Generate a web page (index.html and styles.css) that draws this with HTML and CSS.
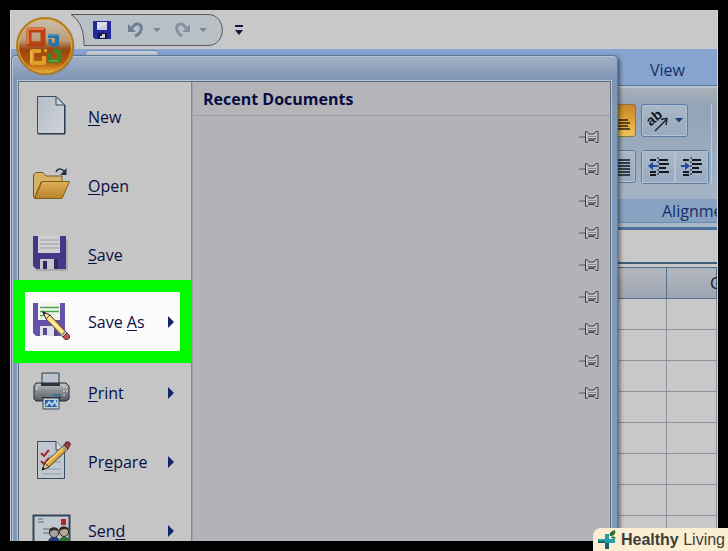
FILE: index.html
```html
<!DOCTYPE html>
<html lang="en">
<head>
    <meta charset="UTF-8">
    <meta name="viewport" content="width=device-width, initial-scale=1.0">
    <title>Office Menu</title>
    <link rel="stylesheet" href="styles.css">
</head>
<body>
    <div class="window">
        <!-- title bar with quick access toolbar -->
        <header class="titlebar">
            <div class="quick">
                <svg class="quick-shape" viewBox="0 0 156 34" width="156" height="34" aria-hidden="true">
                    <path d="M1 1.500H138C157 1.500 157 32.500 138 32.500H14C14 18 11 8 1 1.500Z" fill="#b9c0c6" stroke="#55585e"/>
                </svg>
                <button class="qbtn" aria-label="Save">
                    <svg viewBox="0 0 18 18" width="18" height="18">
                        <path d="M0 0H18V18H2L0 16Z" fill="#25279c"/>
                        <path d="M4 1H14V9H4Z" fill="#c4cbe0"/>
                        <path d="M4 1H14V3L4 8Z" fill="#dde0e8"/>
                        <path d="M5 12H14V18H5Z" fill="#10104a"/>
                        <path d="M9 13H12V17H7V15H9Z" fill="#c9cad4"/>
                    </svg>
                </button>
                <button class="qbtn" aria-label="Undo">
                    <svg viewBox="0 0 18 18" width="18" height="18">
                        <path d="M5 7C9 0 16 3 14 9C13 13 11 14 8 15" fill="none" stroke="#6c7e96" stroke-width="3"/>
                        <path d="M1 3V11H9Z" fill="#6c7e96"/>
                    </svg>
                </button>
                <span class="drop"></span>
                <button class="qbtn" aria-label="Redo">
                    <svg viewBox="0 0 18 18" width="18" height="18">
                        <path d="M13 7C9 0 2 3 4 9C5 13 7 14 9 15" fill="none" stroke="#8592a3" stroke-width="3"/>
                        <path d="M17 3V11H9Z" fill="#8592a3"/>
                    </svg>
                </button>
                <span class="drop"></span>
            </div>
            <button class="customize" aria-label="Customize Quick Access Toolbar">
                <svg viewBox="0 0 10 12" width="10" height="12">
                    <path d="M1 1H9V3H1ZM1 6H9L5 11Z" fill="#10194a"/>
                </svg>
            </button>
        </header>

        <nav class="tabs">
            <span class="tab-home"></span>
            <a href="#view">View</a>
        </nav>

        <section class="ribbon">
            <div class="group">
                <div class="tools">
                    <div class="tool-row">
                        <button class="tool gold" aria-label="Bottom Align">
                            <svg viewBox="0 0 12 20" width="12" height="20">
                                <path d="M0 9H10M0 12H12M0 15H10M0 18H12" stroke="#2a2410" stroke-width="1.500"/>
                            </svg>
                        </button>
                        <button class="tool wide" aria-label="Orientation">
                            <svg viewBox="0 0 24 24" width="24" height="24">
                                <text x="1" y="13" transform="rotate(-40 9 10)" class="ab">ab</text>
                                <path d="M9 22L20 11M15 10.500L21 9.500L20 16" fill="none" stroke="#20242c" stroke-width="1.500"/>
                            </svg>
                            <svg viewBox="0 0 8 5" width="8" height="5"><path d="M0 0H8L4 4.500Z" fill="#1f3f6e"/></svg>
                        </button>
                    </div>
                    <div class="tool-row">
                        <button class="tool" aria-label="Justify">
                            <svg viewBox="0 0 12 20" width="12" height="20">
                                <path d="M0 3H12M0 6H12M0 9H12M0 12H12M0 15H12M0 18H12" stroke="#15181e" stroke-width="1.500"/>
                            </svg>
                        </button>
                        <div class="pair">
                            <button class="tool" aria-label="Decrease Indent">
                                <svg viewBox="0 0 22 20" width="22" height="20">
                                    <path d="M2 3H8M11 3H20M11 7H21M11 11H18M2 15H8M11 15H21M2 18H8" stroke="#15181e" stroke-width="2"/>
                                    <path d="M10 0V20" stroke="#15181e" stroke-dasharray="2 2"/>
                                    <path d="M0 9L5 5V8H9V10H5V13Z" fill="#1e49a0"/>
                                </svg>
                            </button>
                            <button class="tool" aria-label="Increase Indent">
                                <svg viewBox="0 0 22 20" width="22" height="20">
                                    <path d="M2 3H8M11 3H20M11 7H21M11 11H18M2 15H8M11 15H21M2 18H8" stroke="#15181e" stroke-width="2"/>
                                    <path d="M10 0V20" stroke="#15181e" stroke-dasharray="2 2"/>
                                    <path d="M9 9L4 5V8H0V10H4V13Z" fill="#1e49a0"/>
                                </svg>
                            </button>
                        </div>
                    </div>
                </div>
                <div class="group-name">Alignment</div>
            </div>
        </section>

        <div class="formula"></div>

        <table class="sheet">
            <thead>
                <tr><th class="col-f">F</th><th>G</th></tr>
            </thead>
            <tbody>
                <tr><td></td><td></td></tr>
                <tr><td></td><td></td></tr>
                <tr><td></td><td></td></tr>
                <tr><td></td><td></td></tr>
                <tr><td></td><td></td></tr>
                <tr><td></td><td></td></tr>
                <tr><td></td><td></td></tr>
                <tr><td></td><td></td></tr>
            </tbody>
        </table>

        <!-- office menu -->
        <div class="menu">
            <div class="panes">
                <nav class="commands">
                    <button class="item">
                        <svg viewBox="0 0 40 40" width="40" height="40">
                            <defs>
                                <linearGradient id="paper" x1="0" y1="0" x2="1" y2="1"><stop offset="0" stop-color="#b4bdc8"/><stop offset="1" stop-color="#d2d3d8"/></linearGradient>
                                <linearGradient id="folder" x1="0" y1="0" x2="0" y2="1"><stop offset="0" stop-color="#dfb055"/><stop offset="1" stop-color="#b9822a"/></linearGradient>
                                <linearGradient id="body" x1="0" y1="0" x2="0" y2="1"><stop offset="0" stop-color="#b8bbc0"/><stop offset="1" stop-color="#55585e"/></linearGradient>
                            </defs>
                            <path d="M6.500 1.500H25L33.500 10V38.500H6.500Z" fill="url(#paper)" stroke="#374b62"/>
                            <path d="M25 1.500V10H33.500Z" fill="#c9d3dc" stroke="#374b62"/>
                            <path d="M34 10V39H7" fill="none" stroke="#1f3040"/>
                        </svg>
                        <span><u>N</u>ew</span>
                    </button>
                    <button class="item">
                        <svg viewBox="0 0 40 40" width="40" height="40">
                            <path d="M2.500 33V11L5 8.500H12L15 12H31V18H10L3.500 34Z" fill="#d8b263" stroke="#75582a"/>
                            <path d="M3.500 34.500L11 17.500H38.500L31 34.500Z" fill="url(#folder)" stroke="#805c1e"/>
                            <path d="M25 8C27 4 32 4 34 9" fill="none" stroke="#253444" stroke-width="1.500"/>
                            <path d="M35.500 4V11H29Z" fill="#253444"/>
                        </svg>
                        <span><u>O</u>pen</span>
                    </button>
                    <button class="item">
                        <svg viewBox="0 0 40 40" width="40" height="40">
                            <path d="M5 37H36V6" fill="none" stroke="#aaaaae" stroke-width="2"/>
                            <path d="M2 3H35V36H5L2 33Z" fill="#453787"/>
                            <path d="M7 3H29V20H7Z" fill="#cfd0cf"/>
                            <path d="M9 7H28M9 11H28M9 15H28" stroke="#999e9e"/>
                            <path d="M9 26H26V36H9Z" fill="#c3c5cc"/>
                            <path d="M12 28H16V36H12ZM23 26H27V36H23Z" fill="#30265e"/>
                        </svg>
                        <span><u>S</u>ave</span>
                    </button>
                    <button class="item marked">
                        <svg viewBox="0 0 40 40" width="40" height="40">
                            <path d="M2 3H34V36H5L2 33Z" fill="#6552a8"/>
                            <path d="M7 3H29V20H7Z" fill="#f2f5f0"/>
                            <path d="M9 7.500H28M9 11.500H28M9 15.500H20" stroke="#48a547" stroke-width="1.500"/>
                            <path d="M9 26H26V36H9Z" fill="#dedfe8"/>
                            <path d="M12 28H16V35H12ZM23 26H26V36H23Z" fill="#54458f"/>
                            <path d="M12 12L15 19L33 38L37 34L19 15Z" fill="#f2cb68" stroke="#58452b"/>
                            <path d="M17 17L34 35" stroke="#fff0ad" stroke-width="2"/>
                            <path d="M12 12L19 15L15 19Z" fill="#f1dfbd" stroke="#58452b"/>
                            <path d="M11 11L15 13L13 15Z" fill="#18202c"/>
                            <path d="M32 37L36 33L38.500 35.500V38L36.500 39.500H34Z" fill="#b95260" stroke="#5d3038"/>
                            <path d="M30 36L35 31" stroke="#9a9b92" stroke-width="2"/>
                        </svg>
                        <span>Save <u>A</u>s</span>
                        <i class="arrow"></i>
                    </button>
                    <button class="item">
                        <svg viewBox="0 0 40 40" width="40" height="40">
                            <path d="M11 14V2H28V14Z" fill="#bac2cf" stroke="#303843"/>
                            <path d="M5 12H35L38 15V28L35 30H5L3 28V15Z" fill="url(#body)" stroke="#282b30"/>
                            <path d="M6 14H34" stroke="#d0d0d0"/>
                            <path d="M10 12H29V15H10Z" fill="#303238"/>
                            <path d="M5 20H36" stroke="#85888d"/>
                            <path d="M11 26H30L28 30H13Z" fill="#202329"/>
                            <path d="M12 27H28V38H12Z" fill="#c5ced7" stroke="#394859"/>
                            <path d="M14 29H26V36H14Z" fill="#285f9f"/>
                            <path d="M15 35L18 31L21 34L24 30L26 35" fill="none" stroke="#b5d6ed" stroke-width="2"/>
                            <path d="M6 16V19M33 15V17M33 19V21M33 23V25M36 15V17M36 19V21" stroke="#dcdcdc" stroke-width="1"/>
                            <path d="M23 24H29" stroke="#2a70ad" stroke-width="2"/>
                        </svg>
                        <span><u>P</u>rint</span>
                        <i class="arrow"></i>
                    </button>
                    <button class="item">
                        <svg viewBox="0 0 40 40" width="40" height="40">
                            <path d="M6.500 1.500H25L33.500 10V38.500H6.500Z" fill="#c2c7cf" stroke="#374b62"/>
                            <path d="M25 1.500V10H33.500" fill="#d5dae0" stroke="#374b62"/>
                            <path d="M17 16H30M20 22H30M12 29H30M12 34H30" stroke="#8d9db2"/>
                            <path d="M10 13L13 16L18 10M10 21L13 24L18 18" fill="none" stroke="#a42935" stroke-width="2"/>
                            <path d="M11 30L14 23L33 5L37 9L18 27Z" fill="#d8a640" stroke="#4d3b22"/>
                            <path d="M15 24L33 7" stroke="#f0d077" stroke-width="2"/>
                            <path d="M11 30L14 23L18 27Z" fill="#d6c29b" stroke="#4d3b22"/>
                            <path d="M11 30L12 27L14 29Z" fill="#161a20"/>
                            <path d="M33 5L35 2H38L39.500 4L37 9Z" fill="#9c3847" stroke="#502a31"/>
                            <path d="M31 6L36 11" stroke="#98978f" stroke-width="2"/>
                        </svg>
                        <span>Pr<u>e</u>pare</span>
                        <i class="arrow"></i>
                    </button>
                    <button class="item">
                        <svg viewBox="0 0 40 40" width="40" height="40">
                            <path d="M2.500 6.500H38.500V34.500H2.500Z" fill="#c2c8cf" stroke="#35465a" stroke-width="2"/>
                            <path d="M7 10H12M7 13H13M12 20H20M12 24H18" stroke="#566a82"/>
                            <path d="M30 10H35V16H30Z" fill="#bb2222"/>
                            <circle cx="23" cy="24" r="4.500" fill="#a7a39c" stroke="#262626"/>
                            <path d="M18 23C18 17 27 17 28 22L23 21Z" fill="#302c2a"/>
                            <path d="M17 34C17 28 21 28 24 28C28 28 29 31 29 34Z" fill="#203a78"/>
                            <circle cx="33" cy="23" r="4.500" fill="#b8aa91" stroke="#262626"/>
                            <path d="M28 22C28 16 37 16 38 21L33 20Z" fill="#302c2a"/>
                            <path d="M28 34C28 28 31 28 34 28C38 28 39 31 39 34Z" fill="#28742e"/>
                        </svg>
                        <span>Sen<u>d</u></span>
                        <i class="arrow"></i>
                    </button>
                </nav>
                <section class="recent">
                    <h2>Recent Documents</h2>
                    <ul class="pins">
                        <li><button aria-label="Pin document 1"><svg viewBox="0 0 20 14" width="20" height="14"><use href="#pin"/></svg></button></li>
                        <li><button aria-label="Pin document 2"><svg viewBox="0 0 20 14" width="20" height="14"><use href="#pin"/></svg></button></li>
                        <li><button aria-label="Pin document 3"><svg viewBox="0 0 20 14" width="20" height="14"><use href="#pin"/></svg></button></li>
                        <li><button aria-label="Pin document 4"><svg viewBox="0 0 20 14" width="20" height="14"><use href="#pin"/></svg></button></li>
                        <li><button aria-label="Pin document 5"><svg viewBox="0 0 20 14" width="20" height="14"><use href="#pin"/></svg></button></li>
                        <li><button aria-label="Pin document 6"><svg viewBox="0 0 20 14" width="20" height="14"><use href="#pin"/></svg></button></li>
                        <li><button aria-label="Pin document 7"><svg viewBox="0 0 20 14" width="20" height="14"><use href="#pin"/></svg></button></li>
                        <li><button aria-label="Pin document 8"><svg viewBox="0 0 20 14" width="20" height="14"><use href="#pin"/></svg></button></li>
                        <li><button aria-label="Pin document 9"><svg viewBox="0 0 20 14" width="20" height="14"><use href="#pin"/></svg></button></li>
                    </ul>
                </section>
            </div>
        </div>

        <button class="office" aria-label="Office Button">
            <svg viewBox="0 0 60 60" width="60" height="60">
                <defs>
                    <linearGradient id="orb" x1="0" y1="0" x2="0" y2="1">
                        <stop offset="0" stop-color="#c9c0b2"/>
                        <stop offset="0.400" stop-color="#bd9c78"/>
                        <stop offset="0.560" stop-color="#98450f"/>
                        <stop offset="0.800" stop-color="#b85a10"/>
                        <stop offset="1" stop-color="#f0b53a"/>
                    </linearGradient>
                </defs>
                <circle cx="31" cy="31" r="28.500" fill="#85878a"/>
                <circle cx="30" cy="30" r="28" fill="url(#orb)" stroke="#b47d1c" stroke-width="2"/>
                <circle cx="30" cy="30" r="26.500" fill="none" stroke="#dfa94b"/>
                <path d="M14 14H28V28H14Z" fill="none" stroke="#b9400f" stroke-width="5" stroke-linejoin="round"/>
                <path d="M13 13H29M13 13V28" stroke="#e57a45" stroke-width="2"/>
                <path d="M33 20H42V29H36" fill="none" stroke="#2674aa" stroke-width="4" stroke-linejoin="round"/>
                <path d="M33 19H43" stroke="#67a6cc" stroke-width="1"/>
                <path d="M35 23V29" stroke="#2674aa" stroke-width="3"/>
                <path d="M26 35H17V47H29V40" fill="none" stroke="#dba025" stroke-width="4" stroke-linejoin="round"/>
                <path d="M16 35V47" stroke="#f0cc62" stroke-width="1"/>
                <path d="M39 35H44V45H34V37" fill="none" stroke="#3f8428" stroke-width="4" stroke-linejoin="round"/>
                <path d="M34 45H43" stroke="#86b452" stroke-width="1"/>
                <path d="M29 33H32V36H29Z" fill="#dba025"/>
            </svg>
        </button>
    </div>

    <footer class="brand">
        <svg viewBox="0 0 20 20" width="20" height="20" aria-hidden="true">
            <path d="M8 4H12V9H18V13H12V19H8V13H1V9H8Z" fill="#1fa0aa"/>
            <path d="M8 13H12V19H8ZM1 11H8V13H1Z" fill="#17636e"/>
            <path d="M13 6C12 3 14 1 18 0C19 4 17 6 13 6ZM14 7C16 6 18 7 19 8C17 9 15 9 14 7Z" fill="#2f6c2d"/>
        </svg>
        <span><b>Healthy</b> Living</span>
    </footer>

    <svg width="0" height="0" class="symbols" aria-hidden="true">
        <symbol id="pin" viewBox="0 0 20 14">
            <path d="M0 7H6" stroke="#55585c"/>
            <path d="M6.500 1.500H8L10 4H15L17 1.500H19V12.500H17L15 10.500H10L8 12.500H6.500Z" fill="#bfc0c4" stroke="#3c3e42"/>
            <path d="M9 8H17V10H9Z" fill="#6d7074"/>
            <path d="M9 6.500H17" stroke="#8a8c90"/>
        </symbol>
    </svg>
</body>
</html>
```
FILE: styles.css
```css
* {
    box-sizing: border-box;
}
body {
    margin: 0;
    padding: 10px;
    height: 100vh;
    background: #000;
    font-family: "Open Sans", "Noto Sans", sans-serif;
    font-size: 16px;
    font-weight: 500;
    color: #070f45;
    overflow: hidden;
}
button {
    margin: 0;
    padding: 0;
    border: none;
    background: none;
    font: inherit;
    color: inherit;
    cursor: pointer;
}
svg {
    display: block;
    flex: none;
}
.symbols {
    position: absolute;
}
.window {
    position: relative;
    height: 100%;
    overflow: hidden;
    background: #c8c8c8;
    border-left: 1px solid #d4d4d4;
    border-right: 1px solid #d4d4d4;
}

/* title bar */
.titlebar {
    display: flex;
    align-items: center;
    height: 39px;
    padding-left: 59px;
    background: #c8c8c8;
}
.quick {
    position: relative;
    display: flex;
    align-items: center;
    gap: 12px;
    width: 156px;
    height: 34px;
    padding-left: 23px;
}
.quick-shape {
    position: absolute;
    left: 0;
    top: 0;
}
.qbtn {
    position: relative;
}
.qbtn:first-of-type {
    margin-right: 4px;
}
.drop {
    position: relative;
    border: 4px solid transparent;
    border-top-color: #7f858d;
    border-bottom: 0;
    margin-left: -4px;
}
.customize {
    margin-left: 8px;
}

/* ribbon */
.tabs {
    display: flex;
    justify-content: space-between;
    height: 37px;
    padding: 1px 32px 0 74px;
    background: #86a4cf;
    border-bottom: 1px solid #53779e;
}
.tab-home {
    width: 74px;
    background: #c3cad2;
    border: 1px solid #6d8fbb;
    border-radius: 4px 4px 0 0;
}
.tabs a {
    line-height: 40px;
    color: #132f6b;
    text-decoration: none;
}
.ribbon {
    height: 144px;
    padding: 2px 0 0 588px;
    background: linear-gradient(#a9b0b8, #93a3b8 20px, #a9b9c8);
    border-top: 2px solid #b9c4cf;
    border-bottom: 3px solid #4a709b;
    white-space: nowrap;
}
.tools {
    display: flex;
    flex-direction: column;
    gap: 13px;
    height: 81px;
    margin: 14px 5px 14px 0;
    border-right: 1px solid #c0c9d2;
}
.tool-row {
    display: flex;
    gap: 5px;
}
.tool {
    display: flex;
    align-items: center;
    justify-content: center;
    width: 37px;
    height: 33px;
    padding-left: 12px;
    border: 1px solid #5c7ba3;
    border-radius: 3px;
    background: linear-gradient(#aab8c8, #98aac1);
    box-shadow: inset 0 0 0 1px #b5c1ce;
}
.tool.gold {
    background: linear-gradient(#c8862c, #e6a93b 60%, #e8c35c);
    border-color: #8f7441;
    box-shadow: none;
}
.tool.wide {
    gap: 5px;
    width: 47px;
    padding-left: 0;
}
.ab {
    font: bold 14px "Liberation Sans", sans-serif;
    fill: #15181e;
}
.pair {
    display: flex;
    border: 1px solid #5c7ba3;
    border-radius: 3px;
}
.pair .tool {
    width: 33px;
    height: 32px;
    padding: 0;
    border: none;
    border-radius: 0;
}
.group-name {
    height: 24px;
    padding-left: 63px;
    background: #88a2c1;
    border-bottom: 1px solid #6c8bac;
    color: #132f6b;
    line-height: 24px;
}
.formula {
    height: 34px;
    border-bottom: 2px solid #3d5d7c;
}

/* cells */
.sheet {
    width: 100%;
    margin-top: 3px;
    border-collapse: collapse;
    table-layout: fixed;
}
.sheet th {
    height: 31px;
    padding: 0 0 0 43px;
    border: 1px solid #52718f;
    background: linear-gradient(#b4b8be, #9da5b3);
    font-weight: 500;
    text-align: left;
    color: #14181e;
}
.sheet th.col-f {
    width: 655px;
    padding-left: 598px;
}
.sheet td {
    height: 31px;
    padding: 0;
    border: 1px solid #8a919e;
}

/* menu */
.menu {
    position: absolute;
    top: 45px;
    left: 0;
    right: 99px;
    bottom: 0;
    display: flex;
    flex-direction: column;
    padding: 25px 6px 0 6px;
    background: linear-gradient(#a3b1c6, #7d95b5 24px, #7d9aba 60px);
    border: 1px solid #5f7897;
    border-bottom: none;
    border-radius: 5px 5px 0 0;
    box-shadow: inset 1px 1px 0 #b4c4d6, 2px 2px 4px rgba(0, 0, 0, 0.5);
}
.panes {
    flex: 1;
    display: flex;
    min-height: 0;
    border: 1px solid #5e6c7c;
    border-bottom: none;
    outline: 1px solid #b4c5d5;
}
.commands {
    width: 173px;
    background: #c5c5c5;
    border-right: 1px solid #858890;
}
.item {
    display: flex;
    align-items: center;
    gap: 17px;
    width: 100%;
    height: 69px;
    padding: 0 17px 0 12px;
    text-align: left;
}
.item svg {
    margin-bottom: 3px;
}
.item u {
    text-underline-offset: 2px;
}
.item.marked {
    position: relative;
    width: 179px;
    height: 83px;
    margin: -9px 0 -5px -6px;
    padding: 0 6px;
    background: #fbfbfb;
    border: 12px solid #00fb00;
}
.arrow {
    margin-left: auto;
    border: 6px solid transparent;
    border-left-color: #14266a;
    border-right: 0;
}
.recent {
    flex: 1;
    background: #b1b3b8;
    border-left: 1px solid #a0a3aa;
}
.recent h2 {
    height: 34px;
    margin: 0 0 5px;
    padding-left: 10px;
    border-bottom: 1px solid #9c9ea4;
    background: #b5b5b9;
    font-size: 16px;
    line-height: 34px;
    color: #070d42;
}
.pins {
    margin: 0;
    padding: 0 11px 0 0;
    list-style: none;
}
.pins li {
    display: flex;
    align-items: center;
    justify-content: flex-end;
    height: 32px;
}
.office {
    position: absolute;
    left: 4px;
    top: 6px;
}

/* corner label */
.brand {
    position: absolute;
    right: 0;
    bottom: 0;
    display: flex;
    align-items: center;
    gap: 4px;
    height: 23px;
    padding: 0 3px 0 4px;
    border-radius: 8px 0 0 0;
    background: #fbeed3;
    font: 16px "Liberation Sans", Arial, sans-serif;
    color: #3c3d3a;
}
```
